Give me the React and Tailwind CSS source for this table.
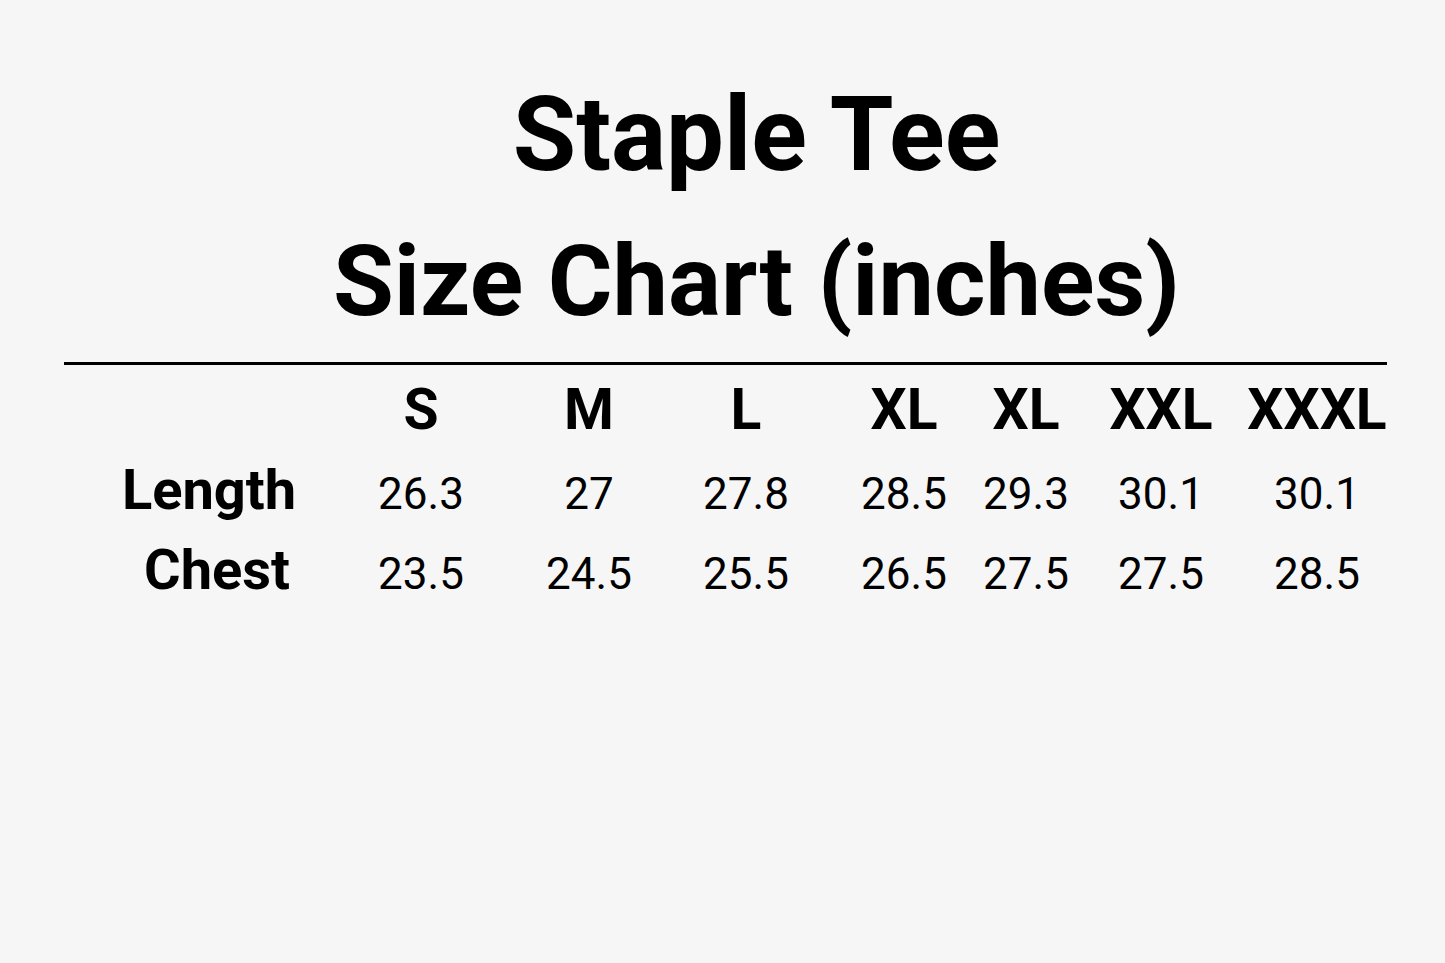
const SIZES = ['S', 'M', 'L', 'XL', 'XL', 'XXL', 'XXXL']

const ROWS = [
  { label: 'Length', pad: 'pr-[2px]', values: ['26.3', '27', '27.8', '28.5', '29.3', '30.1', '30.1'] },
  { label: 'Chest', pad: 'pl-[14px]', values: ['23.5', '24.5', '25.5', '26.5', '27.5', '27.5', '28.5'] },
]

export default function App() {
  return (
    <div className="min-h-screen w-full bg-[#f6f6f6] text-black font-['Roboto',sans-serif]">
      {/* Title */}
      <div className="flex flex-col items-center pt-[83px] pl-[68px]">
        <h1 className="text-[103px] leading-none font-bold">Staple Tee</h1>
        <h2 className="mt-[46px] text-[99px] leading-none font-bold">Size Chart (inches)</h2>
      </div>

      {/* Table */}
      <div className="mx-[64px] mt-[31px] w-[1323px]">
        <div className="h-[3px] bg-black" />
        <div className="mt-[16px] pl-[36px] grid grid-cols-[220px_202px_134px_180px_136px_108px_162px_150px] gap-y-[24px] items-baseline">
          <div />
          {SIZES.map((s, i) => (
            <div key={i} className="text-center text-[57px] leading-none font-bold">{s}</div>
          ))}
          {ROWS.map(row => (
            <>
              <div key={row.label} className={`text-center text-[56px] leading-none font-bold ${row.pad}`}>{row.label}</div>
              {row.values.map((v, i) => (
                <div key={row.label + i} className="text-center text-[44px] leading-none">{v}</div>
              ))}
            </>
          ))}
        </div>
      </div>
    </div>
  )
}
